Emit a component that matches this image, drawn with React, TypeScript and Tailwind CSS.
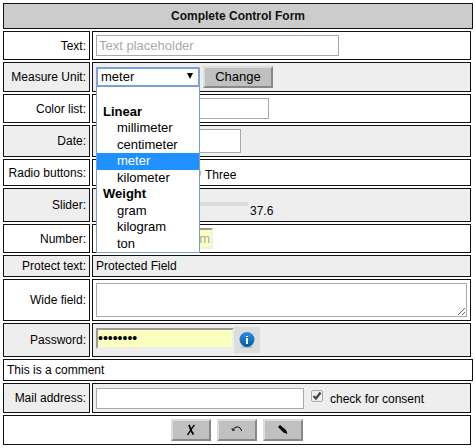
import React from "react";

const cell = "border border-[#111]";
const field = "border border-[#a9a9a9] bg-white px-[2px] text-[13px] outline-none placeholder:text-[#a9a9a9] rounded-none";
const raised =
  "flex h-[22px] shrink-0 items-center justify-center border-2 border-t-[#ddd] border-l-[#ddd] border-r-[#888] border-b-[#888] bg-[#c0c0c0] text-[13px]";

type RowProps = {
  label: string;
  htmlFor?: string;
  shaded?: boolean;
  className?: string;
  children: React.ReactNode;
};

function Row({ label, htmlFor, shaded, className = "items-center py-[3px]", children }: RowProps) {
  const bg = shaded ? "bg-[#eee]" : "bg-white";
  return (
    <div className="mr-[2px] flex gap-[2px]">
      <div className={`${cell} ${bg} flex w-[87px] shrink-0 items-center justify-end pr-[3px]`}>
        <label htmlFor={htmlFor} className="whitespace-nowrap leading-[16px]">
          {label}
        </label>
      </div>
      <div className={`${cell} ${bg} flex min-w-0 flex-1 px-[3px] ${className}`}>{children}</div>
    </div>
  );
}

const units = [
  { text: "", group: false },
  { text: "Linear", group: true },
  { text: "millimeter", group: false },
  { text: "centimeter", group: false },
  { text: "meter", group: false },
  { text: "kilometer", group: false },
  { text: "Weight", group: true },
  { text: "gram", group: false },
  { text: "kilogram", group: false },
  { text: "ton", group: false },
];

function UnitMenu() {
  return (
    <ul
      role="listbox"
      aria-label="Measure Unit"
      className="absolute top-[19px] left-0 z-10 flex h-[167px] w-full flex-col border border-[#7a9cd3] bg-white text-[13px]"
    >
      {units.map((u) => (
        <li
          key={u.text}
          role={u.group ? "presentation" : "option"}
          aria-selected={u.group ? undefined : u.text === "meter"}
          className={`flex flex-1 items-center leading-[16px] ${u.group ? "pl-[6px] font-bold" : "pl-[20px]"} ${
            u.text === "meter" ? "bg-[#1e90ff] text-white" : ""
          }`}
        >
          {u.text}
        </li>
      ))}
    </ul>
  );
}

export default function App() {
  return (
    <form
      className="flex flex-col gap-[2px] bg-white pt-[3px] pr-[2px] pb-[3px] pl-[3px] font-['Liberation_Sans',Arial,sans-serif] text-[12px] text-black"
      onSubmit={(e) => e.preventDefault()}
    >
      <h1 className={`${cell} bg-[#ccc] text-center font-bold leading-[24px] text-[#111]`}>Complete Control Form</h1>

      <Row label="Text:" htmlFor="text">
        <input id="text" type="text" placeholder="Text placeholder" className={`${field} h-[21px] w-[243px]`} />
      </Row>

      <Row label="Measure Unit:" htmlFor="unit" shaded>
        <div className="relative mr-[3px] w-[104px]">
          <select
            id="unit"
            defaultValue="meter"
            className="block h-[20px] w-full appearance-none rounded-[1px] border-2 border-[#7ba3e0] bg-white pl-[3px] text-[13px] leading-[16px] outline-none"
          >
            <optgroup label="Linear">
              <option>millimeter</option>
              <option>centimeter</option>
              <option>meter</option>
              <option>kilometer</option>
            </optgroup>
            <optgroup label="Weight">
              <option>gram</option>
              <option>kilogram</option>
              <option>ton</option>
            </optgroup>
          </select>
          <svg className="pointer-events-none absolute top-[6px] right-[7px]" width="6" height="6" viewBox="0 0 6 6">
            <path d="M0 0H6L3 6Z" />
          </svg>
          <UnitMenu />
        </div>
        <button type="button" className={`${raised} w-[70px]`}>
          Change
        </button>
      </Row>

      <Row label="Color list:" htmlFor="color">
        <input id="color" type="text" className={`${field} h-[21px] w-[173px]`} />
      </Row>

      <Row label="Date:" htmlFor="date" shaded>
        <input id="date" type="text" className={`${field} h-[24px] w-[145px]`} />
      </Row>

      <Row label="Radio buttons:" htmlFor="three" className="items-start pt-[7px] pb-[2px]">
        <input
          id="three"
          type="radio"
          className="ml-[93px] h-[12px] w-[12px] appearance-none rounded-full border border-[#a9a9a9] bg-[#eee]"
        />
        <label htmlFor="three" className="ml-[4px] leading-[16px]">
          Three
        </label>
      </Row>

      <Row label="Slider:" htmlFor="slider" shaded className="items-start py-[13px]">
        <input
          id="slider"
          type="range"
          min="0"
          max="100"
          defaultValue="37.6"
          step="0.1"
          className="h-[4px] w-[152px] appearance-none bg-[#e0dbd6]"
        />
        <output htmlFor="slider" className="ml-[2px] h-[6px] leading-[18px]">
          37.6
        </output>
      </Row>

      <Row label="Number:" htmlFor="number">
        <input
          id="number"
          type="text"
          placeholder="m"
          className="h-[21px] w-[117px] border-2 border-t-[#999] border-l-[#999] border-r-[#eee] border-b-[#eee] bg-[#faffbd] pr-px text-right text-[13px] outline-none placeholder:text-[#a9a9a9]"
        />
      </Row>

      <Row label="Protect text:" shaded className="items-center py-[2px]">
        <span className="leading-[16px]">Protected Field</span>
      </Row>

      <Row label="Wide field:" htmlFor="wide" className="py-[3px]">
        <textarea id="wide" className={`${field} h-[34px] w-full resize`} />
      </Row>

      <Row label="Password:" htmlFor="password" shaded className="items-start py-[3px]">
        <input
          id="password"
          type="password"
          defaultValue="password"
          className="mt-px h-[21px] w-[138px] border-2 border-t-[#999] border-l-[#999] border-r-[#eee] border-b-[#eee] bg-[#faffbd] text-[14px] outline-none"
        />
        <button type="button" aria-label="Password information" className="flex h-[26px] w-[26px] items-center justify-center bg-[#ddd]">
          <svg width="16" height="16" viewBox="0 0 16 16">
            <defs>
              <linearGradient id="info" x1="0" y1="0" x2="0" y2="1">
                <stop offset="0" stopColor="#2f8ee0" />
                <stop offset="1" stopColor="#0759a3" />
              </linearGradient>
            </defs>
            <ellipse cx="8" cy="15" rx="6" ry="1" fill="#bbb" />
            <circle cx="8" cy="7.5" r="7.5" fill="url(#info)" />
            <rect x="7" y="4" width="2" height="1" fill="#fff" />
            <rect x="7" y="6" width="2" height="6" fill="#fff" />
          </svg>
        </button>
      </Row>

      <p className={`${cell} py-[2px] pl-[3px] leading-[16px]`}>This is a comment</p>

      <Row label="Mail address:" htmlFor="mail" shaded className="items-center pt-[4px] pb-[3px]">
        <input id="mail" type="email" className={`${field} h-[21px] w-[208px]`} />
        <span className="relative mt-[2px] ml-[7px] flex h-[12px] w-[12px] self-start">
          <input
            id="consent"
            type="checkbox"
            defaultChecked
            className="h-[12px] w-[12px] appearance-none rounded-[2px] border border-[#aaa] bg-[#eee]"
          />
          <svg className="pointer-events-none absolute inset-0" width="12" height="12" viewBox="0 0 12 12">
            <path d="M2.5 6L5 8.5L9.5 2.5" fill="none" stroke="#444" strokeWidth="2.2" />
          </svg>
        </span>
        <label htmlFor="consent" className="ml-[7px] leading-[16px]">
          check for consent
        </label>
      </Row>

      <div className={`${cell} mr-[2px] flex justify-center gap-[6px] py-[3px]`}>
        <button type="button" aria-label="Cancel" className={`${raised} w-[40px]`}>
          <svg width="10" height="12" viewBox="0 0 10 12" fill="none" stroke="#000">
            <path d="M3 1C4 3 5 8 7.5 10.5" strokeWidth="1.8" />
            <path d="M8.500 1C6 3.5 4 7.5 1.5 11" strokeWidth="1.3" />
          </svg>
        </button>
        <button type="button" aria-label="Undo" className={`${raised} w-[40px]`}>
          <svg width="12" height="10" viewBox="0 0 12 10" fill="none" stroke="#000">
            <path d="M2 5C3.5 1 9.5 0.500 10.500 6" />
            <path d="M1 3L1.500 5.500L4 5" strokeWidth="0.8" />
          </svg>
        </button>
        <button type="button" aria-label="Edit" className={`${raised} w-[40px]`}>
          <svg width="12" height="10" viewBox="0 0 12 10">
            <path d="M1 2L3 0L9 5L10.500 9L6.500 7.500Z" />
          </svg>
        </button>
      </div>
    </form>
  );
}
